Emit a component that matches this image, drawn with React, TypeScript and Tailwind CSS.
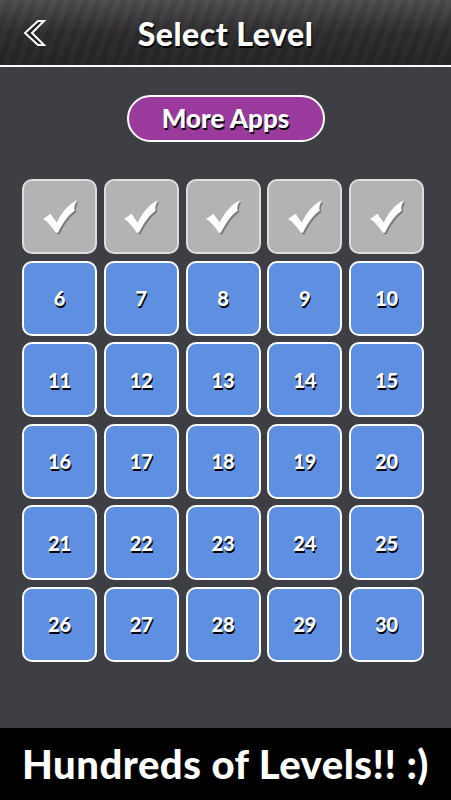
import React from "react";

const font = { fontFamily: "Lato, 'DejaVu Sans', sans-serif" };

function Check() {
  return (
    <svg width="42" height="38" viewBox="0 0 40 36">
      <path
        d="M4 20 L11 15 L17 23 C22 13 28 6 36 2 C34 6 33 9 34 12 C28 16 23 23 18 33 L16 33 C12 27 8 23 4 20 Z"
        fill="#555"
        transform="translate(1.5,1.5)"
        opacity="0.6"
      />
      <path
        d="M4 20 L11 15 L17 23 C22 13 28 6 36 2 C34 6 33 9 34 12 C28 16 23 23 18 33 L16 33 C12 27 8 23 4 20 Z"
        fill="#fff"
      />
    </svg>
  );
}

export default function App() {
  const levels = Array.from({ length: 30 }, (_, i) => i + 1);
  return (
    <div className="w-[451px] h-[800px] flex flex-col bg-[#3d3f45] overflow-hidden" style={font}>
      <div
        className="h-[67px] relative flex items-center justify-center border-b-2 border-white pt-[2px]"
        style={{
          background:
            "repeating-linear-gradient(110deg, rgba(255,255,255,0.02) 0px, rgba(255,255,255,0.02) 6px, rgba(0,0,0,0.04) 6px, rgba(0,0,0,0.04) 12px), linear-gradient(#4c4b4e, #2e2c2d 50%, #252323)",
        }}
      >
        <svg className="absolute left-[22px] top-[19px]" width="26" height="28" viewBox="0 0 26 28">
          <path d="M16 2 L22 2 L10 14 L22 26 L16 26 L3 14 Z" fill="#222" stroke="#fff" strokeWidth="2" strokeLinejoin="miter" />
        </svg>
        <div
          className="text-white text-[32px] font-black tracking-[0.5px]"
          style={{ textShadow: "1px 2px 0 #000" }}
        >
          Select Level
        </div>
      </div>
      <div className="flex-1 flex flex-col items-center pt-[28px]">
        <div
          className="w-[198px] h-[47px] rounded-full bg-[#9a3a9c] border-2 border-white flex items-center justify-center text-white text-[26px] font-black"
          style={{ textShadow: "1px 2px 0 #000" }}
        >
          More Apps
        </div>
        <div className="mt-[37px] self-start ml-[22px] grid grid-cols-5 gap-x-[6.75px] gap-y-[6.6px]">
          {levels.map((n) =>
            n <= 5 ? (
              <div
                key={n}
                className="w-[75px] h-[75px] rounded-[10px] border-2 border-[#ddd] bg-[#b3b3b3] flex items-center justify-center"
              >
                <Check />
              </div>
            ) : (
              <div
                key={n}
                className="w-[75px] h-[75px] rounded-[10px] border-2 border-white bg-[#5e8fe0] flex items-center justify-center text-white text-[20px] font-black"
                style={{ textShadow: "1px 2px 0 #000" }}
              >
                {n}
              </div>
            )
          )}
        </div>
      </div>
      <div className="h-[72px] bg-black flex items-center justify-center">
        <div className="text-white text-[40px] font-black tracking-[0.5px]">Hundreds of Levels!! :)</div>
      </div>
    </div>
  );
}
